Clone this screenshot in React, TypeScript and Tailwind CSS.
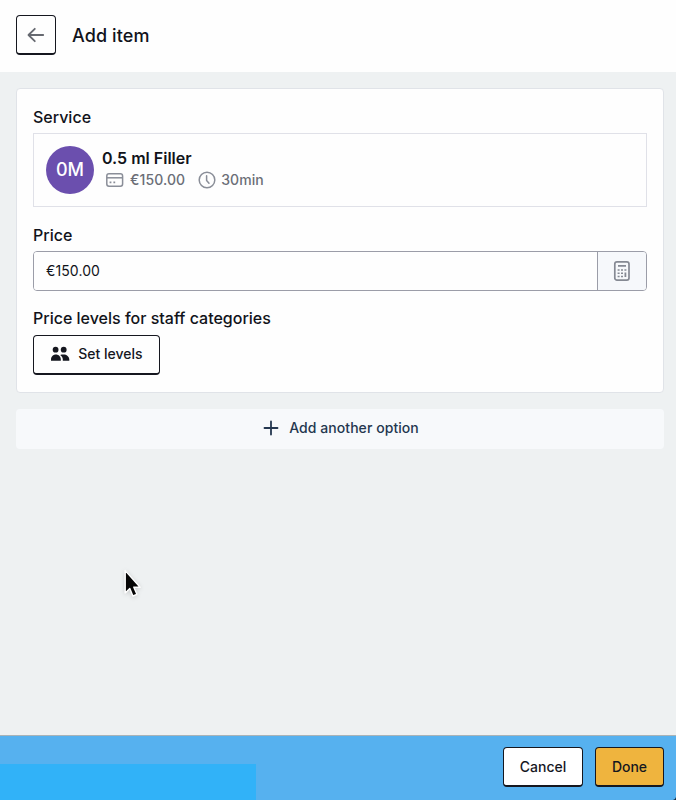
import type { ReactNode } from "react";

function BackIcon() {
  return (
    <svg width="18" height="16" viewBox="0 0 18 16" fill="none" stroke="#666970" strokeWidth="1.8" strokeLinecap="round" strokeLinejoin="round">
      <path d="M16.2 8H1.8M7.8 1.8 1.5 8l6.3 6.2" />
    </svg>
  );
}

function CardIcon() {
  return (
    <svg width="18" height="14" viewBox="0 0 18 14" fill="none" stroke="#8a8e98" strokeWidth="1.5">
      <rect x="0.8" y="0.8" width="15.8" height="12.4" rx="2.2" />
      <path d="M1 4.8h15.6" />
      <path d="M3.6 9.4h1.8M7.4 9.4h1.8" strokeWidth="1.8" />
    </svg>
  );
}

function ClockIcon() {
  return (
    <svg width="18" height="18" viewBox="0 0 18 18" fill="none" stroke="#8a8e98" strokeWidth="1.5" strokeLinecap="round" strokeLinejoin="round">
      <circle cx="9" cy="9" r="7.8" />
      <path d="M8.6 4.8v4.6l2.4 2.8" />
    </svg>
  );
}

function CalculatorIcon() {
  return (
    <svg width="18" height="20" viewBox="0 0 18 20" fill="none" stroke="#858993">
      <rect x="1.8" y="0.9" width="14.2" height="18.2" rx="2.2" strokeWidth="1.7" />
      <path d="M5 4.8h8" strokeWidth="1.7" />
      <path d="M4.6 9h2M8 9h2M11.4 9h2M4.6 12.2h2M8 12.2h2M4.6 15.4h2M8 15.4h2" strokeWidth="1.5" />
      <path d="M12.4 11.5v4.6" strokeWidth="1.8" />
    </svg>
  );
}

function PeopleIcon() {
  return (
    <svg width="20" height="16" viewBox="0 0 20 16" fill="#15171f">
      <circle cx="5.6" cy="3.7" r="2.9" />
      <circle cx="13.7" cy="3.7" r="2.9" />
      <path d="M1 14.8v-1.3c0-2.8 2-5 4.9-5s4.9 2.2 4.9 5v1.3z" />
      <path d="M10.2 8.9c.9-.3 2-.4 3.2-.4 3.3 0 5.9 2.1 5.9 5v1.3h-6.5v-1.3c0-1.9-1-3.5-2.6-4.6z" />
    </svg>
  );
}

function PlusIcon() {
  return (
    <svg width="16" height="16" viewBox="0 0 16 16" fill="none" stroke="#24374f" strokeWidth="1.8" strokeLinecap="round">
      <path d="M8 1.5v13M1.5 8h13" />
    </svg>
  );
}

function Button({ children, className = "" }: { children: ReactNode; className?: string }) {
  return (
    <button
      type="button"
      className={`flex h-10 items-center justify-center rounded border border-b-2 border-[#15171f] text-sm font-medium text-[#15171f] ${className}`}
    >
      {children}
    </button>
  );
}

export default function App() {
  return (
    <div className="relative flex h-[800px] w-[676px] flex-col overflow-hidden bg-[#eef1f2] font-['Inter',sans-serif] text-[#11131a]">
      <header className="flex h-[72px] shrink-0 items-center gap-4 bg-[#fefefe] px-4 pb-0.5">
        <Button className="w-10 bg-[#fefefe]">
          <BackIcon />
        </Button>
        <h1 className="pt-0.5 text-lg font-medium tracking-[0.1px]">Add item</h1>
      </header>

      <main className="flex-1 pt-4 pr-3 pl-4">
        <section className="h-[305px] rounded border border-[#e0e3e8] bg-[#fefefe] px-4 pt-4">
          <h2 className="text-base font-medium">Service</h2>
          <div className="mt-1 flex h-[74px] items-center border border-[#e0e1e8] px-3">
            <div className="grid h-12 w-12 place-items-center rounded-full bg-[#6b4fae] text-lg font-medium text-white">0M</div>
            <div className="ml-2 pb-0.5">
              <div className="text-base leading-[22px] font-semibold">0.5 ml Filler</div>
              <div className="flex h-[22px] items-center pl-1 text-sm font-medium tracking-[0.1px] text-[#6b6e77]">
                <CardIcon />
                <span className="ml-1.5">€150.00</span>
                <span className="ml-[13px]">
                  <ClockIcon />
                </span>
                <span className="ml-[5px]">30min</span>
              </div>
            </div>
          </div>

          <label htmlFor="price" className="mt-4 block text-base font-medium">
            Price
          </label>
          <div className="mt-1 flex h-10 overflow-hidden rounded border border-[#9b9da8]">
            <input id="price" defaultValue="€150.00" className="min-w-0 flex-1 bg-[#fefefe] px-3 text-sm tracking-[0.1px] outline-none" />
            <button type="button" aria-label="Calculator" className="grid w-[49px] place-items-center border-l border-[#9b9da8] bg-[#f6f8fb]">
              <CalculatorIcon />
            </button>
          </div>

          <h2 className="mt-[15px] text-base font-medium">Price levels for staff categories</h2>
          <Button className="mt-[5px] w-[127px] gap-2 bg-[#fefefe] pb-px">
            <PeopleIcon />
            Set levels
          </Button>
        </section>

        <button
          type="button"
          className="mt-4 flex h-10 w-full items-center justify-center gap-2.5 rounded-sm bg-[#f7f9fb] pb-0.5 pl-0.5 text-sm font-medium tracking-[0.06px] text-[#24374f]"
        >
          <PlusIcon />
          Add another option
        </button>
      </main>

      <footer className="relative flex h-[65px] shrink-0 items-start justify-end gap-3 border-t border-[#a9b3b7] bg-[#56b1ef] pt-[11px] pr-3">
        <div className="absolute bottom-0 left-0 h-9 w-64 bg-[#31b2f8]" />
        <Button className="w-20 bg-white">Cancel</Button>
        <Button className="w-[69px] bg-[#efb43e]">Done</Button>
        {/* rounded window corner */}
        <svg className="absolute right-0 bottom-0" width="3" height="3" viewBox="0 0 3 3">
          <path d="M3 0v3H0Q2.5 2.5 3 0z" fill="#17293a" />
        </svg>
      </footer>

      {/* mouse pointer */}
      <svg className="absolute top-[569px] left-[122px] drop-shadow-sm" width="20" height="32" viewBox="0 0 20 32">
        <path d="M3.2 1.6v22.3l4.6-4.4 3.1 7.5 4-1.7-3.1-7.1h6.3z" fill="#050505" stroke="#fff" strokeWidth="1.4" strokeLinejoin="round" />
      </svg>
    </div>
  );
}
